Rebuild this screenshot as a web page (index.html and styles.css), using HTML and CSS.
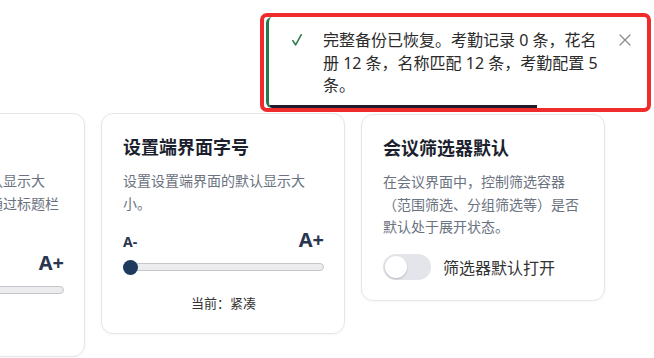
FILE: index.html
```html
<!doctype html>
<html>
<head>
  <meta charset="utf-8">
  <title>设置</title>
  <link rel="stylesheet" href="styles.css">
</head>
<body>
  <div class="cards">
    <section class="card">
      <h3 class="card-title">会议界面字号</h3>
      <p class="card-desc">设置会议主界面的默认显示大小。会议中也可临时通过标题栏按钮调整。</p>
      <div class="size-row"><span class="size-small">A-</span><span class="size-large">A+</span></div>
      <div class="slider"><span class="slider-knob knob-mid"></span></div>
      <p class="size-current">当前：标准</p>
    </section>

    <section class="card">
      <h3 class="card-title">设置端界面字号</h3>
      <p class="card-desc">设置设置端界面的默认显示大小。</p>
      <div class="size-row"><span class="size-small">A-</span><span class="size-large">A+</span></div>
      <div class="slider"><span class="slider-knob"></span></div>
      <p class="size-current">当前：紧凑</p>
    </section>

    <section class="card">
      <h3 class="card-title">会议筛选器默认</h3>
      <p class="card-desc">在会议界面中，控制筛选容器（范围筛选、分组筛选等）是否默认处于展开状态。</p>
      <label class="switch-row">
        <span class="switch"><span class="switch-knob"></span></span>
        <span class="switch-label">筛选器默认打开</span>
      </label>
    </section>
  </div>

  <!-- 恢复成功提示 -->
  <div class="toast-frame">
    <div class="toast">
      <svg class="toast-icon" width="10" height="12" viewBox="0 0 10 12">
        <path d="M0.8 6.6 L3.6 10.8 L9.2 0.8" fill="none" stroke="#2f7d50" stroke-width="1.6" stroke-linecap="round" stroke-linejoin="round"/>
      </svg>
      <p class="toast-text">完整备份已恢复。考勤记录 0 条，花名册 12 条，名称匹配 12 条，考勤配置 5 条。</p>
      <svg class="toast-close" width="12" height="12" viewBox="0 0 12 12">
        <path d="M1 1 L11 11 M11 1 L1 11" stroke="#8a8a8a" stroke-width="1.2" stroke-linecap="round"/>
      </svg>
      <span class="toast-progress"></span>
    </div>
  </div>
</body>
</html>
```

FILE: styles.css
```css
html, body { margin: 0; padding: 0; }
body {
  background: #fff;
  font-family: "Noto Sans", "Noto Sans CJK SC", sans-serif;
  overflow: hidden;
  height: 358px;
  position: relative;
}

.cards {
  display: grid;
  grid-template-columns: repeat(3, 244px);
  column-gap: 16px;
  align-items: start;
  padding-top: 113px;
  margin-left: -159px;
}
.card {
  box-sizing: border-box;
  background: #fff;
  border: 1px solid #e4e6eb;
  border-radius: 12px;
  padding: 20px 20px 20px 21px;
  box-shadow: 0 1px 3px rgba(0, 0, 0, 0.04);
}
.card:nth-child(3) { margin-top: 1px; }
.card-title {
  margin: 0;
  font-size: 18px;
  font-weight: 700;
  line-height: 26px;
  color: #1b1f2e;
}
.card-desc {
  margin: 10px 0 0;
  font-size: 14px;
  line-height: 22.5px;
  color: #6b7280;
}

/* 字号滑块 */
.size-row {
  display: flex;
  justify-content: space-between;
  align-items: baseline;
  margin-top: 15px;
  color: #2a3550;
  font-weight: 700;
  line-height: 20px;
}
.size-small { font-size: 14px; }
.size-large { font-size: 20px; }
.slider {
  position: relative;
  margin-top: 11px;
  height: 8px;
  box-sizing: border-box;
  border: 1px solid #c4c6cb;
  border-radius: 4px;
  background: #ececee;
}
.slider-knob {
  position: absolute;
  left: -1px;
  top: 50%;
  width: 15px;
  height: 15px;
  margin-top: -7.5px;
  border-radius: 50%;
  background: #1e3a5f;
}
.knob-mid { left: 45%; }
.size-current {
  margin: 22px 0 0;
  text-align: center;
  font-size: 13px;
  line-height: 20px;
  color: #333;
}

/* 开关 */
.switch-row {
  display: flex;
  align-items: center;
  gap: 12px;
  margin-top: 15px;
}
.switch {
  position: relative;
  width: 48px;
  height: 26px;
  border-radius: 13px;
  background: #e3e5eb;
}
.switch-knob {
  position: absolute;
  left: 2px;
  top: 2px;
  width: 22px;
  height: 22px;
  border-radius: 50%;
  background: #fff;
  box-shadow: 0 1px 2px rgba(0, 0, 0, 0.2);
}
.switch-label {
  font-size: 16px;
  color: #333;
}

/* 提示框 */
.toast-frame {
  position: absolute;
  left: 260px;
  top: 13px;
  width: 391px;
  height: 99px;
  box-sizing: border-box;
  border: 4px solid #ef2b2b;
  border-radius: 7px;
}
.toast {
  position: relative;
  box-sizing: border-box;
  height: 100%;
  margin-left: 2px;
  display: flex;
  align-items: flex-start;
  padding: 12px 16px 0 23px;
  background: #fff;
  border-left: 3px solid #237a4a;
  border-radius: 6px;
  overflow: hidden;
}
.toast-icon { flex: none; margin-top: 5px; }
.toast-text {
  margin: 0 0 0 21px;
  width: 284px;
  font-size: 16px;
  line-height: 22.5px;
  color: #2b2b2b;
}
.toast-close { flex: none; margin: 5px 0 0 auto; }
.toast-progress {
  position: absolute;
  left: 0;
  bottom: 0;
  width: 268px;
  height: 3px;
  background: #1f1c2c;
}
```
